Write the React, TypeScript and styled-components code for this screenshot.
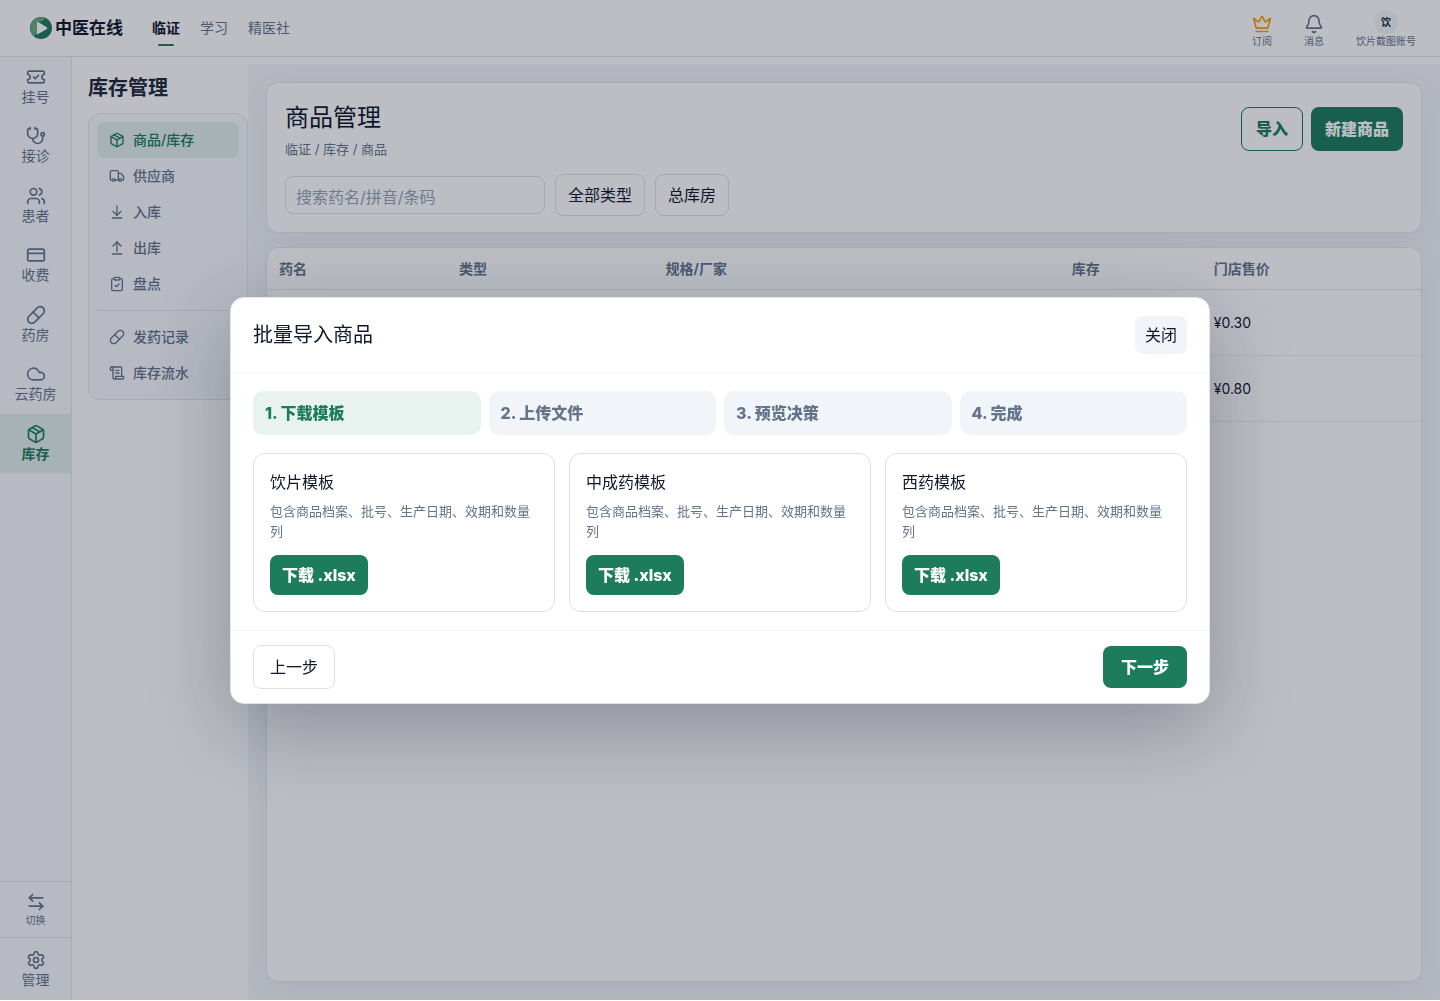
import React from "react";
import styled, { createGlobalStyle } from "styled-components";
import {
  ArrowDownToLine,
  ArrowLeftRight,
  ArrowUpFromLine,
  Bell,
  ClipboardCheck,
  Cloud,
  CreditCard,
  Crown,
  Package,
  Pill,
  ScrollText,
  Settings,
  Stethoscope,
  TicketCheck,
  Truck,
  Users,
} from "lucide-react";

const color = {
  green: "#1c7c5b",
  greenSoft: "#e8f3ef",
  ink: "#0f172a",
  inkSoft: "#1e293b",
  muted: "#64748b",
  line: "#e2e5ec",
  lineStrong: "#dbe1e9",
  lineSoft: "#f1f5f9",
  panel: "#f8fafc",
  chip: "#f1f5f9",
};

const GlobalStyle = createGlobalStyle`
  *, *::before, *::after { box-sizing: border-box; }
  body {
    margin: 0;
    background: #fff;
    color: ${color.ink};
    font-family: Inter, "Noto Sans CJK SC", sans-serif;
    font-size: 14px;
    line-height: 1.39;
  }
  button, input { font: inherit; color: inherit; }
  h1, h2, h3, p { margin: 0; font-weight: 400; }
  a { color: inherit; text-decoration: none; }
`;

const Page = styled.div`
  display: flex;
  flex-direction: column;
  height: calc(100vh - 1px);
`;

const TopBar = styled.header`
  display: flex;
  align-items: center;
  flex: none;
  height: 57px;
  padding: 0 24px 0 30px;
  border-bottom: 1px solid ${color.line};
`;

const Brand = styled.a`
  display: flex;
  align-items: center;
  gap: 3px;
  font-size: 17px;
  font-weight: 700;
  line-height: 26px;
`;

const TopNav = styled.nav`
  display: flex;
  gap: 20px;
  margin-left: 29px;
`;

const TopLink = styled.a<{ $active?: boolean }>`
  position: relative;
  color: ${(p) => (p.$active ? color.ink : color.muted)};
  font-weight: ${(p) => (p.$active ? 700 : 400)};
  line-height: 20px;

  &::after {
    content: "";
    display: ${(p) => (p.$active ? "block" : "none")};
    position: absolute;
    left: 6px;
    right: 6px;
    bottom: -8px;
    height: 2px;
    border-radius: 1px;
    background: ${color.green};
  }
`;

const TopActions = styled.div`
  display: flex;
  gap: 32px;
  margin-left: auto;
`;

const TopAction = styled.button`
  display: flex;
  flex-direction: column;
  align-items: center;
  justify-content: flex-end;
  height: 40px;
  padding: 0;
  border: 0;
  background: none;
  color: ${color.muted};
  font-size: 10px;
  line-height: 14px;
`;

const Avatar = styled.span`
  display: grid;
  place-items: center;
  width: 24px;
  height: 24px;
  border-radius: 50%;
  background: ${color.chip};
  color: ${color.inkSoft};
  font-weight: 700;
`;

const Body = styled.div`
  display: flex;
  flex: 1;
  min-height: 0;
`;

const Rail = styled.nav`
  display: flex;
  flex-direction: column;
  flex: none;
  width: 72px;
  border-right: 1px solid ${color.line};
  background: ${color.panel};
`;

const RailItem = styled.a<{ $active?: boolean }>`
  display: flex;
  flex-direction: column;
  align-items: center;
  padding: 10px 0;
  color: ${(p) => (p.$active ? color.green : color.muted)};
  background: ${(p) => (p.$active ? "#e2efec" : "transparent")};
  font-weight: ${(p) => (p.$active ? 700 : 400)};
`;

const RailSwitch = styled.button`
  display: flex;
  flex-direction: column;
  align-items: center;
  gap: 2px;
  margin-top: auto;
  padding: 10px 0;
  border: 0;
  border-top: 1px solid ${color.line};
  background: none;
  color: ${color.muted};
  font-size: 10px;
  line-height: 13px;
`;

const RailFoot = styled.div`
  padding: 2px 0 1px;
  border-top: 1px solid ${color.line};
`;

const Side = styled.aside`
  flex: none;
  width: 176px;
  padding: 16px 0 0 16px;
`;

const SideTitle = styled.h2`
  margin-bottom: 10px;
  color: ${color.inkSoft};
  font-size: 20px;
  font-weight: 700;
  line-height: 30px;
`;

const SideMenu = styled.nav`
  padding: 8px;
  border: 1px solid ${color.line};
  border-radius: 12px;
  background: ${color.panel};
`;

const SideLink = styled.a<{ $active?: boolean }>`
  display: flex;
  align-items: center;
  gap: 8px;
  height: 36px;
  padding: 0 12px;
  border-radius: 8px;
  color: ${(p) => (p.$active ? color.green : color.muted)};
  background: ${(p) => (p.$active ? "#e2efec" : "transparent")};
  font-weight: 500;
`;

const SideRule = styled.hr`
  height: 1px;
  margin: 8px 0;
  border: 0;
  background: ${color.line};
`;

const Main = styled.main`
  display: flex;
  flex: 1;
  flex-direction: column;
  gap: 14px;
  min-width: 0;
  margin-top: 7px;
  padding: 18px;
  overflow: hidden;
  background: #f5f7fc;
`;

const Card = styled.section`
  border: 1px solid ${color.line};
  border-radius: 12px;
  background: #fff;
  box-shadow: 0 8px 30px rgba(15, 23, 42, 0.06);
`;

const IntroCard = styled(Card)`
  padding: 16px 18px;
`;

const TableCard = styled(Card)`
  flex: 1;
  overflow: hidden;
`;

const IntroHead = styled.div`
  display: flex;
  align-items: center;
  justify-content: space-between;
`;

const PageTitle = styled.h1`
  margin-bottom: 2px;
  font-size: 24px;
  line-height: 38px;
`;

const Crumbs = styled.p`
  color: ${color.muted};
  font-size: 13px;
  line-height: 20px;
`;

const Actions = styled.div`
  display: flex;
  gap: 8px;
`;

const Button = styled.button<{ $kind: "solid" | "outline" | "plain"; $height: number; $pad: number }>`
  height: ${(p) => p.$height}px;
  padding: 0 ${(p) => p.$pad}px;
  border: ${(p) =>
    p.$kind === "solid" ? "0" : `1px solid ${p.$kind === "outline" ? color.green : color.lineStrong}`};
  border-radius: 8px;
  background: ${(p) => (p.$kind === "solid" ? color.green : "#fff")};
  color: ${(p) => ({ solid: "#fff", outline: color.green, plain: color.ink })[p.$kind]};
  font-size: 16px;
  font-weight: ${(p) => (p.$kind === "plain" ? 400 : 800)};
  line-height: 24px;
`;

const Filters = styled.div`
  display: flex;
  align-items: center;
  gap: 10px;
  margin-top: 15px;
`;

const Search = styled.input`
  width: 260px;
  height: 38px;
  padding: 4px 10px 0;
  border: 1px solid ${color.lineStrong};
  border-radius: 8px;
  background: #fff;
  font-size: 16px;

  &::placeholder {
    color: #94a3b8;
    opacity: 1;
  }
`;

const Table = styled.table`
  width: 100%;
  border-spacing: 0;
  table-layout: fixed;

  th,
  td {
    padding: 0 12px;
    text-align: left;
  }
  th {
    height: 42px;
    border-bottom: 1px solid ${color.line};
    color: ${color.muted};
    font-weight: 700;
  }
  td {
    height: 66px;
    border-bottom: 1px solid #ebeff5;
  }
`;

const Overlay = styled.div`
  position: fixed;
  inset: 0 0 1px;
  display: grid;
  place-items: center;
  padding: 18px;
  background: rgba(15, 23, 42, 0.28);
`;

const Dialog = styled.section`
  width: 100%;
  max-width: 980px;
  border: 1px solid ${color.line};
  border-radius: 14px;
  background: #fff;
  box-shadow: 0 24px 80px rgba(15, 23, 42, 0.28);
`;

const DialogHead = styled.header`
  display: flex;
  align-items: center;
  justify-content: space-between;
  padding: 18px 22px;
  border-bottom: 1px solid ${color.lineSoft};
`;

const DialogTitle = styled.h2`
  font-size: 20px;
  line-height: 30px;
`;

const CloseButton = styled.button`
  height: 38px;
  padding: 0 10px;
  border: 0;
  border-radius: 8px;
  background: ${color.chip};
  font-size: 16px;
  line-height: 24px;
`;

const DialogBody = styled.div`
  display: grid;
  gap: 18px;
  padding: 18px 22px;
`;

const Steps = styled.ol`
  display: grid;
  grid-template-columns: repeat(4, 1fr);
  gap: 8px;
  margin: 0;
  padding: 0;
  list-style: none;
`;

const Step = styled.li<{ $active: boolean }>`
  padding: 10px 12px;
  border-radius: 10px;
  background: ${(p) => (p.$active ? color.greenSoft : color.chip)};
  color: ${(p) => (p.$active ? color.green : color.muted)};
  font-size: 16px;
  font-weight: 800;
  line-height: 24px;
`;

const Templates = styled.div`
  display: grid;
  grid-template-columns: repeat(3, 1fr);
  gap: 14px;
`;

const Template = styled.article`
  padding: 16px;
  border: 1px solid ${color.lineStrong};
  border-radius: 12px;
`;

const TemplateName = styled.h3`
  font-size: 16px;
  line-height: 24px;
`;

const TemplateNote = styled.p`
  margin: 7px 0 14px;
  color: ${color.muted};
  font-size: 13px;
  line-height: 20px;
`;

const DialogFoot = styled.footer`
  display: flex;
  align-items: center;
  justify-content: space-between;
  padding: 14px 22px;
  border-top: 1px solid ${color.lineSoft};
`;

const Logo = () => (
  <svg width="22" height="22" viewBox="0 0 22 22" aria-hidden="true">
    <circle cx="11" cy="11" r="11" fill="#1c7c5b" />
    <path d="M3 18.500A11 11 0 0 1 15 .8Q14 3 11 4.500L7 5v12q-2 1.500-4 1.500Z" fill="#62a98a" />
    <path d="M7 5.500v11q0 1.300 1.200.6l8.600-5.200q1.200-.8 0-1.600L8.200 4.900Q7 4.200 7 5.500Z" fill="#fff" />
    <path
      d="M4.500 14.500Q3.500 8 6 5T13.500 2.500"
      fill="none"
      stroke="#f59e0b"
      strokeWidth="1.2"
      strokeLinecap="round"
      strokeDasharray="0.1 2.4"
    />
  </svg>
);

const railItems = [
  { label: "挂号", Icon: TicketCheck },
  { label: "接诊", Icon: Stethoscope },
  { label: "患者", Icon: Users },
  { label: "收费", Icon: CreditCard },
  { label: "药房", Icon: Pill },
  { label: "云药房", Icon: Cloud },
  { label: "库存", Icon: Package },
];

const stockLinks = [
  { label: "商品/库存", Icon: Package },
  { label: "供应商", Icon: Truck },
  { label: "入库", Icon: ArrowDownToLine },
  { label: "出库", Icon: ArrowUpFromLine },
  { label: "盘点", Icon: ClipboardCheck },
];

const recordLinks = [
  { label: "发药记录", Icon: Pill },
  { label: "库存流水", Icon: ScrollText },
];

const columns = [
  { label: "药名", width: "15.6%" },
  { label: "类型", width: "17.9%" },
  { label: "规格/厂家", width: "35.2%" },
  { label: "库存", width: "12.3%" },
  { label: "门店售价", width: "19%" },
];

const prices = ["¥0.30", "¥0.80"];
const steps = ["下载模板", "上传文件", "预览决策", "完成"];
const templates = ["饮片模板", "中成药模板", "西药模板"];

export default function App() {
  return (
    <>
      <GlobalStyle />
      <Page>
        <TopBar>
          <Brand href="#">
            <Logo />
            中医在线
          </Brand>
          <TopNav>
            <TopLink href="#" $active>
              临证
            </TopLink>
            <TopLink href="#">学习</TopLink>
            <TopLink href="#">精医社</TopLink>
          </TopNav>
          <TopActions>
            <TopAction>
              <Crown size={20} color="#f59e0b" />
              订阅
            </TopAction>
            <TopAction>
              <Bell size={20} />
              消息
            </TopAction>
            <TopAction>
              <Avatar>饮</Avatar>
              饮片截图账号
            </TopAction>
          </TopActions>
        </TopBar>
        <Body>
          <Rail>
            {railItems.map(({ label, Icon }) => (
              <RailItem key={label} href="#" $active={label === "库存"}>
                <Icon size={20} />
                {label}
              </RailItem>
            ))}
            <RailSwitch>
              <ArrowLeftRight size={20} />
              切换
            </RailSwitch>
            <RailFoot>
              <RailItem href="#">
                <Settings size={20} />
                管理
              </RailItem>
            </RailFoot>
          </Rail>
          <Side>
            <SideTitle>库存管理</SideTitle>
            <SideMenu>
              {stockLinks.map(({ label, Icon }, i) => (
                <SideLink key={label} href="#" $active={i === 0}>
                  <Icon size={16} />
                  {label}
                </SideLink>
              ))}
              <SideRule />
              {recordLinks.map(({ label, Icon }) => (
                <SideLink key={label} href="#">
                  <Icon size={16} />
                  {label}
                </SideLink>
              ))}
            </SideMenu>
          </Side>
          <Main>
            <IntroCard>
              <IntroHead>
                <div>
                  <PageTitle>商品管理</PageTitle>
                  <Crumbs>临证 / 库存 / 商品</Crumbs>
                </div>
                <Actions>
                  <Button $kind="outline" $height={44} $pad={14}>
                    导入
                  </Button>
                  <Button $kind="solid" $height={44} $pad={14}>
                    新建商品
                  </Button>
                </Actions>
              </IntroHead>
              <Filters>
                <Search aria-label="搜索药名/拼音/条码" placeholder="搜索药名/拼音/条码" />
                <Button $kind="plain" $height={42} $pad={12}>
                  全部类型
                </Button>
                <Button $kind="plain" $height={42} $pad={12}>
                  总库房
                </Button>
              </Filters>
            </IntroCard>
            <TableCard>
              <Table>
                <colgroup>
                  {columns.map((c) => (
                    <col key={c.label} width={c.width} />
                  ))}
                </colgroup>
                <thead>
                  <tr>
                    {columns.map((c) => (
                      <th key={c.label}>{c.label}</th>
                    ))}
                  </tr>
                </thead>
                <tbody>
                  {prices.map((price) => (
                    <tr key={price}>
                      <td />
                      <td />
                      <td />
                      <td />
                      <td>{price}</td>
                    </tr>
                  ))}
                </tbody>
              </Table>
            </TableCard>
          </Main>
        </Body>
      </Page>
      <Overlay>
        <Dialog role="dialog" aria-modal="true" aria-labelledby="import-title">
          <DialogHead>
            <DialogTitle id="import-title">批量导入商品</DialogTitle>
            <CloseButton>关闭</CloseButton>
          </DialogHead>
          <DialogBody>
            <Steps>
              {steps.map((label, i) => (
                <Step key={label} $active={i === 0}>
                  {`${i + 1}. ${label}`}
                </Step>
              ))}
            </Steps>
            <Templates>
              {templates.map((name) => (
                <Template key={name}>
                  <TemplateName>{name}</TemplateName>
                  <TemplateNote>包含商品档案、批号、生产日期、效期和数量列</TemplateNote>
                  <Button $kind="solid" $height={40} $pad={12}>
                    下载 .xlsx
                  </Button>
                </Template>
              ))}
            </Templates>
          </DialogBody>
          <DialogFoot>
            <Button $kind="plain" $height={44} $pad={16}>
              上一步
            </Button>
            <Button $kind="solid" $height={42} $pad={18}>
              下一步
            </Button>
          </DialogFoot>
        </Dialog>
      </Overlay>
    </>
  );
}
